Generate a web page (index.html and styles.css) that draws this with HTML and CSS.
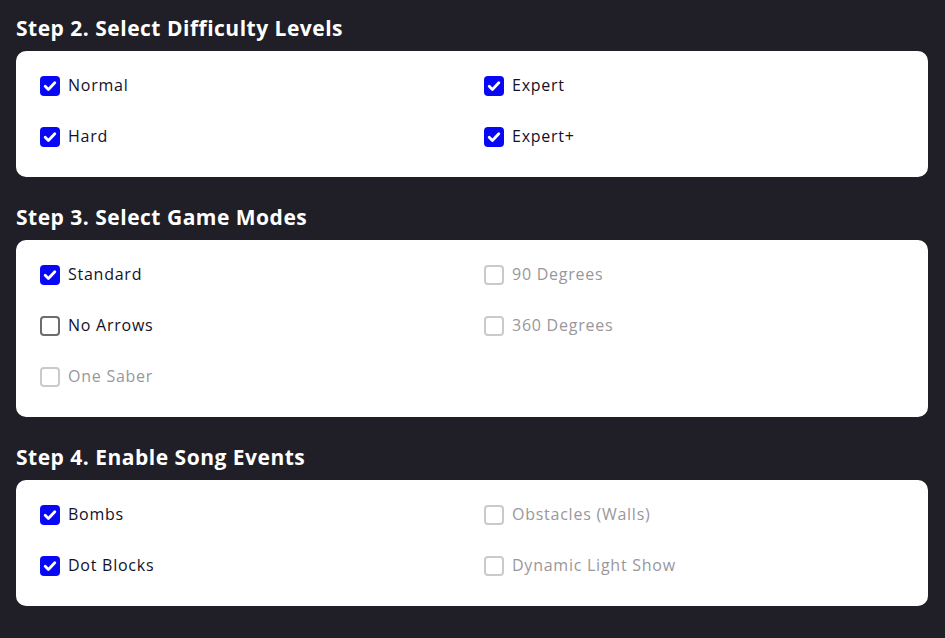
FILE: index.html
```html
<!DOCTYPE html>
<html>
<head>
<meta charset="utf-8">
<link rel="stylesheet" href="styles.css">
</head>
<body>
<main class="page">
  <section class="step">
    <h2 class="step-title">Step 2. Select Difficulty Levels</h2>
    <div class="card">
      <label class="opt"><span class="box checked"><svg viewBox="0 0 20 20"><path d="M5.2 10.3l3.2 3.2 6.4-6.8"/></svg></span><span class="txt">Normal</span></label>
      <label class="opt"><span class="box checked"><svg viewBox="0 0 20 20"><path d="M5.2 10.3l3.2 3.2 6.4-6.8"/></svg></span><span class="txt">Expert</span></label>
      <label class="opt"><span class="box checked"><svg viewBox="0 0 20 20"><path d="M5.2 10.3l3.2 3.2 6.4-6.8"/></svg></span><span class="txt">Hard</span></label>
      <label class="opt"><span class="box checked"><svg viewBox="0 0 20 20"><path d="M5.2 10.3l3.2 3.2 6.4-6.8"/></svg></span><span class="txt">Expert+</span></label>
    </div>
  </section>
  <section class="step">
    <h2 class="step-title">Step 3. Select Game Modes</h2>
    <div class="card">
      <label class="opt"><span class="box checked"><svg viewBox="0 0 20 20"><path d="M5.2 10.3l3.2 3.2 6.4-6.8"/></svg></span><span class="txt">Standard</span></label>
      <label class="opt disabled"><span class="box"></span><span class="txt">90 Degrees</span></label>
      <label class="opt"><span class="box"></span><span class="txt">No Arrows</span></label>
      <label class="opt disabled"><span class="box"></span><span class="txt">360 Degrees</span></label>
      <label class="opt disabled"><span class="box"></span><span class="txt">One Saber</span></label>
    </div>
  </section>
  <section class="step">
    <h2 class="step-title">Step 4. Enable Song Events</h2>
    <div class="card">
      <label class="opt"><span class="box checked"><svg viewBox="0 0 20 20"><path d="M5.2 10.3l3.2 3.2 6.4-6.8"/></svg></span><span class="txt">Bombs</span></label>
      <label class="opt disabled"><span class="box"></span><span class="txt">Obstacles (Walls)</span></label>
      <label class="opt"><span class="box checked"><svg viewBox="0 0 20 20"><path d="M5.2 10.3l3.2 3.2 6.4-6.8"/></svg></span><span class="txt">Dot Blocks</span></label>
      <label class="opt disabled"><span class="box"></span><span class="txt">Dynamic Light Show</span></label>
    </div>
  </section>
</main>
</body>
</html>
```
FILE: styles.css
```css
html, body {
  margin: 0;
  padding: 0;
  background: #201f27;
}
body {
  font-family: "Open Sans", "Liberation Sans", sans-serif;
}
.page {
  padding: 13px 17px 0 16px;
}
.step {
  margin-bottom: 25px;
}
.step-title {
  margin: 0 0 8px 0;
  height: 30px;
  line-height: 30px;
  font-size: 21px;
  letter-spacing: 0.5px;
  font-weight: 700;
  color: #ffffff;
}
.card {
  background: #ffffff;
  border-radius: 10px;
  padding: 9px 24px 15px 24px;
  display: grid;
  grid-template-columns: 1fr 1fr;
  column-gap: 24px;
}
.opt {
  height: 51px;
  display: flex;
  align-items: center;
  gap: 8px;
  font-size: 16px;
  letter-spacing: 0.75px;
  color: #121128;
}
.txt {
  position: relative;
  top: -1px;
}
.box {
  width: 20px;
  height: 20px;
  box-sizing: border-box;
  border: 2px solid #6b6b70;
  border-radius: 4px;
  display: flex;
  align-items: center;
  justify-content: center;
}
.box.checked {
  background: #0808f5;
  border: none;
}
.box svg {
  width: 20px;
  height: 20px;
  fill: none;
  stroke: #ffffff;
  stroke-width: 2.8;
  stroke-linecap: round;
  stroke-linejoin: round;
}
.opt.disabled {
  color: #98979c;
}
.opt.disabled .box {
  border-color: #cacacd;
}
```
